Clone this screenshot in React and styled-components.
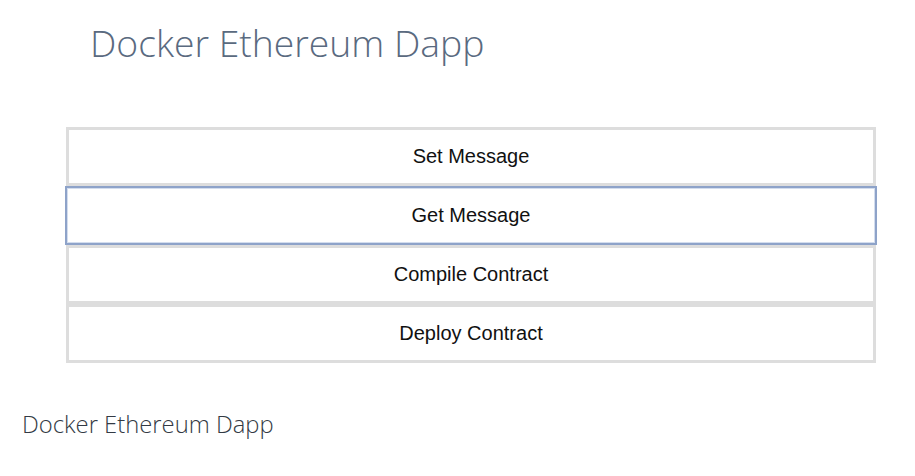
import React from "react";
import styled, { createGlobalStyle } from "styled-components";

const GlobalStyle = createGlobalStyle`
  html, body {
    margin: 0;
    padding: 0;
    background: #fff;
  }
  body {
    font-family: "Open Sans", "Liberation Sans", sans-serif;
  }
`;

const Page = styled.div`
  width: 915px;
  height: 476px;
  display: flex;
  flex-direction: column;
`;

const Title = styled.h1`
  margin: 0;
  padding: 18px 0 0 90px;
  font-family: "Open Sans", sans-serif;
  font-weight: 300;
  font-size: 37.3px;
  line-height: 50px;
  color: #5a6a80;
`;

const ButtonList = styled.div`
  display: flex;
  flex-direction: column;
  margin: 59px 39px 0 66px;
`;

const ActionButton = styled.button`
  height: 59px;
  width: 100%;
  box-sizing: border-box;
  border: 3px solid #dddddd;
  background: #fff;
  font-family: "Liberation Sans", Arial, sans-serif;
  font-size: 20px;
  color: #111;
  cursor: pointer;
  outline: none;

  &.focused {
    border: 2px solid #8ea3c9;
    box-shadow: inset 0 0 0 1px #d3ddee;
    margin-left: -1px;
    width: calc(100% + 2px);
  }
`;

const Footer = styled.footer`
  margin-top: 45px;
  padding-left: 22px;
  font-family: "Open Sans", sans-serif;
  font-weight: 300;
  font-size: 23.8px;
  color: #333a44;
`;

const actions = ["Set Message", "Get Message", "Compile Contract", "Deploy Contract"];

export default function App() {
  return (
    <Page>
      <GlobalStyle />
      <Title>Docker Ethereum Dapp</Title>
      <ButtonList>
        {actions.map((label, i) => (
          <ActionButton key={label} className={i === 1 ? "focused" : undefined}>
            {label}
          </ActionButton>
        ))}
      </ButtonList>
      <Footer>Docker Ethereum Dapp</Footer>
    </Page>
  );
}
